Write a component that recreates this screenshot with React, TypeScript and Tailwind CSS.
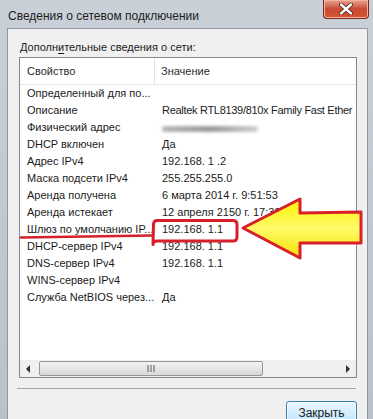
import { ReactNode } from "react";

type Row = { name: string; value: ReactNode };

const rows: Row[] = [
  { name: "Определенный для по...", value: "" },
  {
    name: "Описание",
    value: <span className="tracking-[-0.3px]">Realtek RTL8139/810x Family Fast Ether</span>,
  },
  {
    name: "Физический адрес",
    value: (
      <span className="mt-[2px] block h-[6px] w-[96px] rounded-full bg-gradient-to-r from-[#b8b8b8] via-[#9a9a9a] to-[#d0d0d0] blur-[1.5px]" />
    ),
  },
  { name: "DHCP включен", value: "Да" },
  { name: "Адрес IPv4", value: "192.168. 1 .2" },
  { name: "Маска подсети IPv4", value: "255.255.255.0" },
  { name: "Аренда получена", value: "6 марта 2014 г. 9:51:53" },
  { name: "Аренда истекает", value: "12 апреля 2150 г. 17:32:51" },
  { name: "Шлюз по умолчанию IP...", value: "192.168. 1.1" },
  { name: "DHCP-сервер IPv4", value: "192.168. 1.1" },
  { name: "DNS-сервер IPv4", value: "192.168. 1.1" },
  { name: "WINS-сервер IPv4", value: "" },
  { name: "Служба NetBIOS через...", value: "Да" },
];

export default function App() {
  return (
    <div className="relative flex h-[419px] w-[373px] flex-col overflow-hidden bg-gradient-to-b from-[#c9d0d8] to-[#b9c1ca] font-['Liberation_Sans',Arial,sans-serif] text-[#1b1b1b]">
      {/* title bar */}
      <div className="flex h-[28px] shrink-0 items-start">
        <span className="mt-[8px] pl-[8px] text-[12px] leading-[16px] text-[#1c1c1c]">
          Сведения о сетевом подключении
        </span>
        <CloseButton />
      </div>

      {/* client area */}
      <div className="ml-[7px] mr-[5px] flex flex-1 flex-col border border-[#8d98a4] bg-[#f0f0f0] text-[11px]">
        <div className="mt-[11px] pl-[12px] leading-[14px]">
          Дополн<span className="underline underline-offset-2">и</span>тельные сведения о сети:
        </div>

        <div className="ml-[11px] mt-[3px] flex h-[321px] w-[338px] flex-col border border-[#828790] bg-white">
          <div className="flex h-[27px] shrink-0 border-b border-[#e5e5e5] leading-[26px] text-[#2b2b2b]">
            <div className="w-[135px] border-r border-[#e3e3e3] pl-[7px]">Свойство</div>
            <div className="pl-[6px]">Значение</div>
          </div>
          <div className="flex-1 overflow-hidden">
            {rows.map((r) => (
              <div key={r.name} className="flex h-[17px] items-center leading-[17px]">
                <div className="w-[135px] shrink-0 whitespace-nowrap pl-[7px]">{r.name}</div>
                <div className="whitespace-nowrap pl-[7px]">{r.value}</div>
              </div>
            ))}
          </div>
          <Scrollbar />
        </div>

        <div className="ml-[9px] mt-[10px] h-[2px] w-[339px] border-t border-[#a6a6a6] border-b-white" />

        <div className="ml-[278px] mt-[11px] flex h-[23px] w-[71px] items-center justify-center rounded-[3px] border border-[#3c7fb1] bg-gradient-to-b from-[#eaf6fd] to-[#bee6fd] text-[12px] shadow-[inset_0_0_0_1px_#ffffffa0]">
          Закрыть
        </div>
      </div>

      {/* annotation drawn on top of the screenshot */}
      <svg className="pointer-events-none absolute left-0 top-0" width="373" height="419" viewBox="0 0 373 419">
        <defs>
          <linearGradient id="arrowFill" x1="0" y1="0" x2="0" y2="1">
            <stop offset="0" stopColor="#fff200" />
            <stop offset="0.5" stopColor="#fffb6a" />
            <stop offset="1" stopColor="#f5e000" />
          </linearGradient>
        </defs>
        <path d="M21 237.5 L152 235.5" stroke="#d8202a" strokeWidth="2.5" strokeLinecap="round" fill="none" />
        <path
          d="M157 220.5 L233 220.5 Q237 220.5 237 224.5 L237 237 Q237 241 233 241 L157 241 Q153.5 241 153 244.5 L153.5 224 Q154 220.5 157 220.5 Z"
          stroke="#d8202a"
          strokeWidth="3"
          fill="none"
          strokeLinejoin="round"
        />
        <path
          d="M243 228 L300 199 L300 213 L361 212 L361 243 L300 243 L300 258 Z"
          fill="url(#arrowFill)"
          stroke="#d8202a"
          strokeWidth="3"
          strokeLinejoin="round"
        />
      </svg>
    </div>
  );
}

function CloseButton() {
  return (
    <div className="ml-auto mr-[4px] flex h-[19px] w-[46px] items-center justify-center rounded-b-[4px] border border-t-0 border-[#7a2a22] bg-gradient-to-b from-[#e8a393] via-[#c94a32] to-[#d9532f] shadow-[inset_0_0_0_1px_#f2b3a0]">
      <svg width="14" height="12" viewBox="0 0 14 12">
        <path d="M2 1.5 L12 10.5 M12 1.5 L2 10.5" stroke="#4a1a14" strokeWidth="4" strokeLinecap="round" />
        <path d="M2 1.5 L12 10.5 M12 1.5 L2 10.5" stroke="#ffffff" strokeWidth="2.4" strokeLinecap="round" />
      </svg>
    </div>
  );
}

function Scrollbar() {
  return (
    <div className="flex h-[17px] shrink-0 items-stretch bg-[#f0f0f0]">
      <div className="flex w-[17px] items-center justify-center">
        <svg width="5" height="8" viewBox="0 0 5 8">
          <path d="M4 0 L0 4 L4 8 Z" fill="#303030" />
        </svg>
      </div>
      <div className="my-[1px] ml-[2px] flex w-[224px] items-center justify-center rounded-[2px] border border-[#979797] bg-gradient-to-b from-[#f3f3f3] to-[#d8d8d8]">
        <svg width="8" height="7" viewBox="0 0 8 7">
          <path d="M1 0 V7 M4 0 V7 M7 0 V7" stroke="#5a5a5a" strokeWidth="1" />
        </svg>
      </div>
      <div className="ml-auto flex w-[17px] items-center justify-center">
        <svg width="5" height="8" viewBox="0 0 5 8">
          <path d="M1 0 L5 4 L1 8 Z" fill="#303030" />
        </svg>
      </div>
    </div>
  );
}
